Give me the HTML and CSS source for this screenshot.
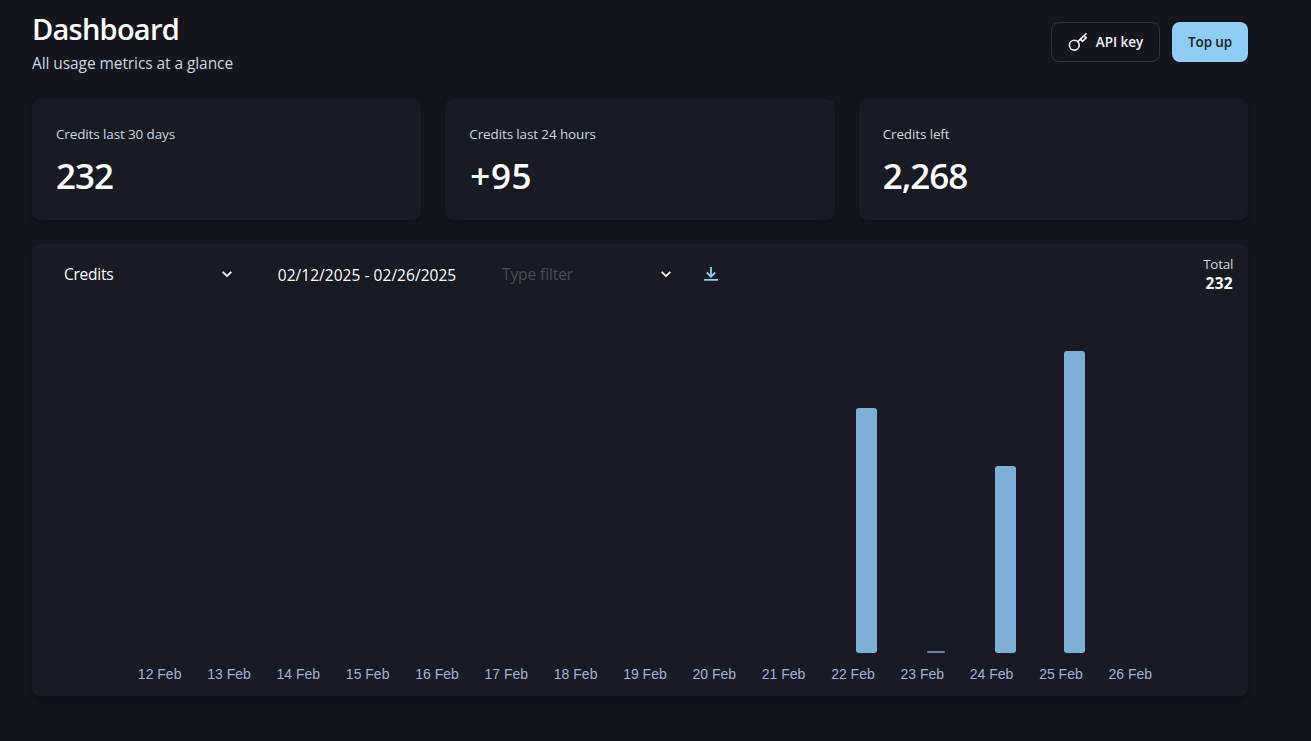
FILE: index.html
```html
<!DOCTYPE html>
<html lang="en">
<head>
<meta charset="utf-8">
<title>Dashboard</title>
<link rel="stylesheet" href="styles.css">
</head>
<body>
<main class="page">
  <header class="header">
    <div class="heading">
      <h1 class="title">Dashboard</h1>
      <p class="subtitle">All usage metrics at a glance</p>
    </div>
    <div class="actions">
      <button class="btn btn-outline">
        <svg class="key" width="20" height="20" viewBox="0 0 20 20" fill="none" stroke="currentColor" stroke-width="1.6" stroke-linecap="round" stroke-linejoin="round"><circle cx="6.3" cy="13.2" r="4.9"/><path d="M9.8 9.7 18 1.8M12.4 7.2l2.3 2.1 3.5-3.4-2.2-2.1"/></svg>
        <span>API key</span>
      </button>
      <button class="btn btn-primary">Top up</button>
    </div>
  </header>
  <section class="stats">
    <div class="card stat"><div class="stat-label">Credits last 30 days</div><div class="stat-value">232</div></div>
    <div class="card stat"><div class="stat-label">Credits last 24 hours</div><div class="stat-value plus">+95</div></div>
    <div class="card stat"><div class="stat-label">Credits left</div><div class="stat-value">2,268</div></div>
  </section>
  <section class="card usage">
    <div class="toolbar">
      <div class="field select"><span>Credits</span><svg width="12" height="8" viewBox="0 0 12 8" fill="none" stroke="currentColor" stroke-width="1.8"><path d="M1.7 1.8 6 6.1l4.3-4.3"/></svg></div>
      <div class="field range"><span>02/12/2025 - 02/26/2025</span></div>
      <div class="field select filter"><span class="placeholder">Type filter</span><svg width="12" height="8" viewBox="0 0 12 8" fill="none" stroke="currentColor" stroke-width="1.8"><path d="M1.7 1.8 6 6.1l4.3-4.3"/></svg></div>
      <svg class="download" width="14" height="14" viewBox="0 0 14 14" fill="none" stroke="currentColor" stroke-width="1.8"><path d="M7 0v9.6M2.8 5.5 7 9.7l4.2-4.2M0 12.8h14"/></svg>
      <div class="total"><div class="total-label">Total</div><div class="total-value">232</div></div>
    </div>
    <div class="bars">
      <i></i><i></i><i></i><i></i><i></i><i></i><i></i><i></i><i></i><i></i>
      <i class="bar" style="height:245px"></i><i class="bar thin" style="height:1.7px"></i><i class="bar" style="height:187px"></i><i class="bar" style="height:302px"></i><i></i>
    </div>
    <div class="axis">
      <span>12 Feb</span><span>13 Feb</span><span>14 Feb</span><span>15 Feb</span><span>16 Feb</span><span>17 Feb</span><span>18 Feb</span><span>19 Feb</span><span>20 Feb</span><span>21 Feb</span><span>22 Feb</span><span>23 Feb</span><span>24 Feb</span><span>25 Feb</span><span>26 Feb</span>
    </div>
  </section>
</main>
</body>
</html>
```
FILE: styles.css
```css
* { box-sizing: border-box; }
body {
  margin: 0;
  height: 741px;
  overflow: hidden;
  background: #15151e;
  color: #fff;
  font-family: "Open Sans", "Noto Sans", sans-serif;
}
.page { width: 1280px; padding: 9px 32px 0; }
.header { display: flex; justify-content: space-between; height: 90px; }
.title { margin: 0; font-size: 29px; line-height: 40px; font-weight: 600; letter-spacing: -0.75px; }
.subtitle { margin: 2px 0 0; font-size: 15.5px; line-height: 24px; letter-spacing: -0.08px; color: #cbd5e0; }
.actions { display: flex; gap: 12px; padding-top: 13px; }
.btn {
  display: flex;
  align-items: center;
  justify-content: center;
  height: 40px;
  padding: 0;
  border: 0;
  border-radius: 8px;
  font: 600 13.5px "Open Sans", "Noto Sans", sans-serif;
  white-space: nowrap;
}
.btn-outline { width: 109px; gap: 8px; border: 1px solid #2d3748; background: transparent; color: #edf2f7; }
.btn-primary { width: 76px; background: #90cdf4; color: #1a202c; letter-spacing: -0.15px; }
.stats { display: grid; grid-template-columns: repeat(3, 1fr); gap: 24px; }
.card { border-radius: 8px; background: #181b23; box-shadow: 0 2px 5px rgba(0, 0, 0, .25); }
.stat { height: 121px; padding: 25px 24px 0; }
.stat-label { font-size: 13.5px; line-height: 21px; letter-spacing: -0.13px; color: #cbd5e0; }
.stat-value { margin-top: 7px; font-size: 35px; line-height: 48px; font-weight: 600; letter-spacing: -1px; }
.plus { padding-left: 1px; letter-spacing: 0.6px; }
.usage { height: 452px; margin-top: 24px; overflow: hidden; box-shadow: 0 4px 8px rgba(0, 0, 0, .3); }
.toolbar { display: flex; height: 66px; padding: 10px 15px 0; }
.field {
  display: flex;
  align-items: center;
  height: 40px;
  border: 1px solid #1a1d29;
  border-radius: 8px;
  font-size: 15.5px;
  letter-spacing: -0.25px;
  white-space: nowrap;
}
.select { width: 200px; padding: 0 13px 0 16px; justify-content: space-between; }
.range { width: 198px; width: 224px; margin: 0 8px; justify-content: center; padding-top: 2px; letter-spacing: 0.04px; }
.filter { padding: 0 14px; }
.placeholder { color: #4a4d55; letter-spacing: -0.1px; }
.download { margin: 13px 0 0 17px; color: #90cdf4; }
.total { margin-left: auto; text-align: right; }
.total-label { font-size: 13.5px; line-height: 20px; letter-spacing: -0.3px; color: #cbd5e0; }
.total-value { font-size: 15.5px; line-height: 18px; font-weight: 700; letter-spacing: 0.3px; }
.bars, .axis { display: grid; grid-template-columns: repeat(15, 69.33px); width: 1040px; }
.bars { height: 343px; margin-left: 107px; align-items: end; justify-items: center; }
.bar { display: block; width: 21px; border-radius: 3px; background: #7eb0d5; }
.thin { width: 18px; border-radius: 1px; opacity: .7; }
.axis { margin: 13px 0 0 93px; font: 14px/16px "Liberation Sans", Arial, sans-serif; text-align: center; color: #a3b0dc; }
```
